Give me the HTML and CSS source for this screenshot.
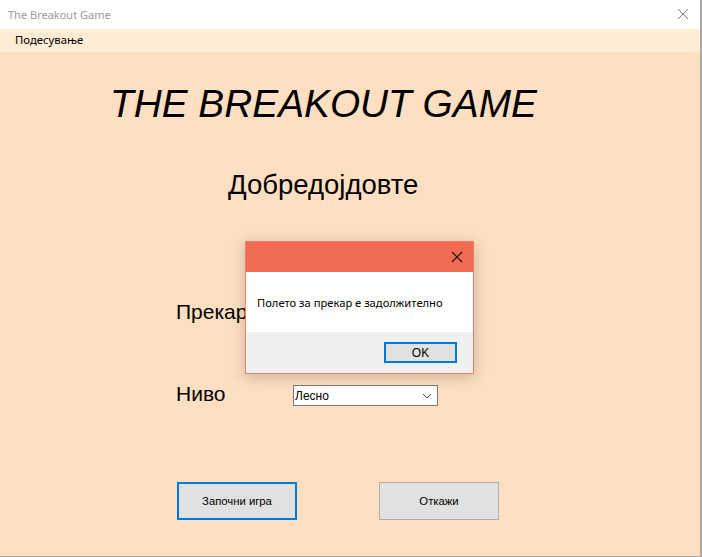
FILE: index.html
```html
<!DOCTYPE html>
<html lang="mk">
<head>
<meta charset="utf-8">
<title>The Breakout Game</title>
<link rel="stylesheet" href="styles.css">
</head>
<body>
<div class="window">
  <div class="titlebar">
    <span class="title">The Breakout Game</span>
    <svg class="win-close" width="12" height="12" viewBox="0 0 12 12"><path d="M1 1 L11 11 M11 1 L1 11" stroke="#7a7a7a" stroke-width="1" fill="none"/></svg>
  </div>
  <div class="menubar"><span class="menu-item">Подесување</span></div>
  <div class="client">
    <h1 class="game-title">THE BREAKOUT GAME</h1>
    <h2 class="welcome">Добредојдовте</h2>
    <div class="field-row nick">
      <label class="field-label">Прекар</label>
      <div class="textbox"></div>
    </div>
    <div class="field-row level">
      <label class="field-label">Ниво</label>
      <div class="select"><span>Лесно</span>
        <svg class="chev" width="10" height="6" viewBox="0 0 10 6"><path d="M1 1 L5 5 L9 1" stroke="#4a4a4a" stroke-width="1" fill="none"/></svg>
      </div>
    </div>
    <div class="buttons">
      <div class="btn primary">Започни игра</div>
      <div class="btn">Откажи</div>
    </div>
  </div>
  <div class="dialog">
    <div class="dlg-title">
      <svg class="dlg-close" width="12" height="12" viewBox="0 0 12 12"><path d="M1 1 L11 11 M11 1 L1 11" stroke="#111" stroke-width="1.1" fill="none"/></svg>
    </div>
    <div class="dlg-body">Полето за прекар е задолжително</div>
    <div class="dlg-footer"><div class="btn ok">OK</div></div>
  </div>
</div>
</body>
</html>
```

FILE: styles.css
```css
html, body {
  margin: 0;
  padding: 0;
  background: #ffffff;
}
.window {
  position: relative;
  width: 700px;
  height: 556px;
  border-right: 2px solid #a8a8a8;
  border-bottom: 1px solid #a8a8a8;
  background: #ffdfc1;
  display: flex;
  flex-direction: column;
  overflow: hidden;
}
.titlebar {
  height: 29px;
  background: #ffffff;
  display: flex;
  align-items: center;
  justify-content: space-between;
  padding: 0 11px 0 8px;
  flex: none;
}
.title {
  font-family: "Noto Sans", "Open Sans", sans-serif;
  font-size: 11px;
  color: #9a9a9a;
  margin-top: -1px;
}
.win-close {
  margin-top: -2px;
}
.menubar {
  height: 23px;
  background: #feecd5;
  display: flex;
  align-items: center;
  padding-left: 15px;
  flex: none;
}
.menu-item {
  font-family: "Noto Sans", "Open Sans", sans-serif;
  font-size: 11.3px;
  color: #000;
  margin-top: -2px;
}
.client {
  flex: 1;
  display: flex;
  flex-direction: column;
}
.game-title {
  margin: 30px 0 0 110px;
  font-family: "Liberation Sans", Arial, sans-serif;
  font-style: italic;
  font-weight: normal;
  font-size: 38.8px;
  line-height: 44px;
  color: #000;
}
.welcome {
  margin: 44px 0 0 228px;
  font-family: "Liberation Sans", Arial, sans-serif;
  font-weight: normal;
  font-size: 27.5px;
  line-height: 30px;
  color: #000;
}
.field-row {
  display: flex;
  align-items: flex-start;
  padding-left: 176px;
}
.nick {
  margin-top: 100px;
}
.level {
  margin-top: 58px;
}
.field-label {
  width: 117px;
  font-family: "Liberation Sans", Arial, sans-serif;
  font-size: 21px;
  line-height: 24px;
  color: #000;
}
.textbox {
  width: 143px;
  height: 19px;
  margin-top: 2px;
  border: 1px solid #7a7a7a;
  background: #fff;
}
.select {
  height: 19px;
  margin-top: 3px;
  border: 1px solid #7a7a7a;
  background: #fff;
  display: flex;
  align-items: center;
  justify-content: space-between;
  padding: 0 5px 0 1px;
  box-sizing: content-box;
  width: 137px;
  font-family: "Liberation Sans", Arial, sans-serif;
  font-size: 12px;
  color: #000;
}
.chev {
  margin-top: 1px;
}
.buttons {
  display: flex;
  gap: 82px;
  padding-left: 177px;
  margin-top: 76px;
}
.btn {
  box-sizing: border-box;
  width: 120px;
  height: 38px;
  background: #e1e1e1;
  border: 1px solid #adadad;
  display: flex;
  align-items: center;
  justify-content: center;
  font-family: "Liberation Sans", Arial, sans-serif;
  font-size: 11.3px;
  color: #000;
}
.btn.primary {
  border: 2px solid #0078d7;
}
.dialog {
  position: absolute;
  left: 245px;
  top: 241px;
  width: 229px;
  height: 133px;
  box-sizing: border-box;
  border: 1px solid #e8806a;
  background: #f0f0f0;
  box-shadow: 0 3px 14px rgba(0, 0, 0, 0.22);
  display: flex;
  flex-direction: column;
}
.dlg-title {
  height: 30px;
  background: #f06b51;
  display: flex;
  align-items: center;
  justify-content: flex-end;
  padding-right: 10px;
  flex: none;
}
.dlg-body {
  height: 60px;
  background: #ffffff;
  display: flex;
  align-items: center;
  padding-left: 11px;
  font-family: "Noto Sans", "Open Sans", sans-serif;
  font-size: 11.2px;
  color: #000;
  flex: none;
}
.dlg-footer {
  flex: 1;
  display: flex;
  justify-content: flex-end;
  align-items: flex-start;
  padding: 10px 16px 0 0;
}
.btn.ok {
  width: 73px;
  height: 21px;
  border: 2px solid #0078d7;
  font-size: 12px;
}
```
